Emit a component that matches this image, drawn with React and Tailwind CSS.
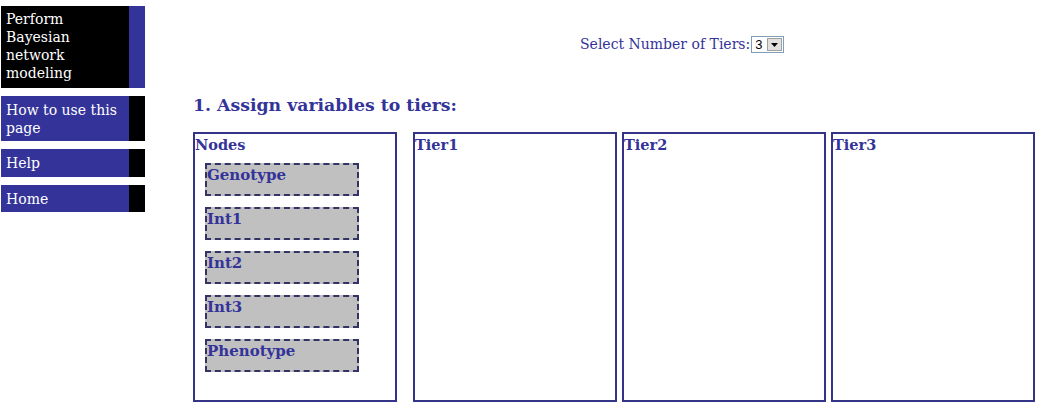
export default function App() {
  const nodes = ["Genotype", "Int1", "Int2", "Int3", "Phenotype"];
  const tiers = ["Tier1", "Tier2", "Tier3"];
  const font = { fontFamily: '"DejaVu Serif", "Liberation Serif", serif' };
  return (
    <div className="relative w-[1039px] h-[409px] bg-white overflow-hidden flex" style={font}>
      <div className="w-[145px] shrink-0 pt-[6px] pl-[1px] flex flex-col gap-[8px] text-white text-[14px] leading-[18px]">
        <div className="flex h-[82px]">
          <div className="w-[128px] bg-black px-[5px] pt-[4px]">Perform Bayesian network modeling</div>
          <div className="w-[16px] bg-[#333399]" />
        </div>
        <div className="flex h-[45px]">
          <div className="w-[128px] bg-[#333399] px-[5px] pt-[5px]">How to use this page</div>
          <div className="w-[16px] bg-black" />
        </div>
        <div className="flex h-[28px]">
          <div className="w-[128px] bg-[#333399] px-[5px] pt-[5px]">Help</div>
          <div className="w-[16px] bg-black" />
        </div>
        <div className="flex h-[27px]">
          <div className="w-[128px] bg-[#333399] px-[5px] pt-[5px]">Home</div>
          <div className="w-[16px] bg-black" />
        </div>
      </div>
      <div className="flex-1 pl-[48px] flex flex-col">
        <div className="h-[36px]" />
        <div className="flex items-center pl-[387px] h-[17px] text-[#333399] text-[14px]">
          <span>Select Number of Tiers:</span>
          <span className="ml-[1px] flex items-center justify-between w-[33px] h-[17px] border border-[#7f9db9] bg-white">
            <span className="pl-[3px] text-black text-[13px] leading-[15px]" style={{ fontFamily: '"Liberation Sans", sans-serif' }}>3</span>
            <span className="w-[15px] h-[13px] mr-[1px] bg-[#e0e0e0] border border-[#a0a0a0] flex items-center justify-center">
              <svg width="7" height="4" viewBox="0 0 7 4"><path d="M0 0h7L3.5 4z" fill="#000" /></svg>
            </span>
          </span>
        </div>
        <div className="mt-[41px] text-[#333399] font-bold text-[17.3px] leading-[22px]">1. Assign variables to tiers:</div>
        <div className="mt-[16px] flex">
          <div className="w-[204px] h-[270px] border-2 border-[#333388] text-[#333399] font-bold text-[14.5px] leading-[18px]">
            <div className="pl-[0px] pt-[2px]">Nodes</div>
            <div className="pl-[10px] pt-[9px] flex flex-col gap-[11px]">
              {nodes.map((n) => (
                <div key={n} className="w-[154px] h-[33px] bg-[#c0c0c0] border-2 border-dashed border-[#333366] pt-[1px] text-[15px]">{n}</div>
              ))}
            </div>
          </div>
          <div className="ml-[16px] flex gap-[5px]">
            {tiers.map((t) => (
              <div key={t} className="w-[204px] h-[270px] border-2 border-[#333388] text-[#333399] font-bold text-[14.5px] leading-[18px]">
                <div className="pl-[0px] pt-[2px]">{t}</div>
              </div>
            ))}
          </div>
        </div>
      </div>
    </div>
  );
}
